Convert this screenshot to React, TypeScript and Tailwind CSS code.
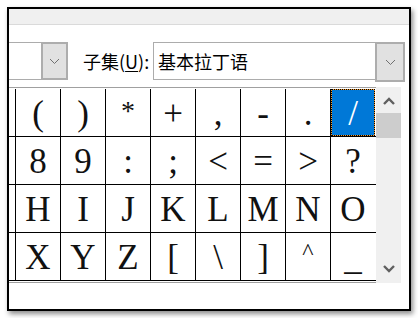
import React from "react";

const rows: string[][] = [
  ["(", ")", "*", "+", ",", "-", ".", "/"],
  ["8", "9", ":", ";", "<", "=", ">", "?"],
  ["H", "I", "J", "K", "L", "M", "N", "O"],
  ["X", "Y", "Z", "[", "\\", "]", "^", "_"],
];

function ComboChevron() {
  return (
    <svg width="11" height="7" viewBox="0 0 11 7">
      <polyline points="1,1 5.5,5.5 10,1" fill="none" stroke="#707070" strokeWidth="1" />
    </svg>
  );
}

function ScrollChevron({ up }: { up?: boolean }) {
  return (
    <svg width="12" height="8" viewBox="0 0 12 8">
      <polyline
        points={up ? "1,7 6,2 11,7" : "1,1 6,6 11,1"}
        fill="none"
        stroke="#606060"
        strokeWidth="2.4"
      />
    </svg>
  );
}

function Glyph({ ch }: { ch: string }) {
  if (ch === "^") {
    return <span className="text-[24px] leading-none -mt-[14px]">{ch}</span>;
  }
  if (ch === "*") {
    return <span className="text-[28px] leading-none -mt-[6px]">{ch}</span>;
  }
  return <span>{ch}</span>;
}

export default function App() {
  return (
    <div className="w-[418px] h-[318px] bg-white overflow-hidden">
      <div className="ml-[7px] mt-[7px] w-[404px] h-[304px] border-2 border-black bg-white flex flex-col shadow-[2px_3px_5px_rgba(0,0,0,0.45)]">
        <div className="h-[15px] box-content bg-[#f0f0f0] border-b border-[#dadada]" />
        <div
          className="h-[62px] flex items-start pt-[17px] text-[18px] text-black"
          style={{ fontFamily: '"Noto Sans CJK SC", "Noto Sans", sans-serif' }}
        >
          <div className="w-[59px] h-[38px] flex">
            <div className="flex-1 border-y border-[#acacac] bg-white" />
            <div className="w-[27px] h-full bg-[#e1e1e1] border-2 border-[#adadad] flex items-center justify-center">
              <ComboChevron />
            </div>
          </div>
          <div className="ml-[15px] h-[38px] flex items-center leading-none">
            子集(<span className="underline underline-offset-2">U</span>):
          </div>
          <div className="ml-auto mr-[4px] w-[252px] h-[38px] flex border border-[#acacac] bg-white">
            <div className="flex-1 flex items-center pl-[4px] leading-none">基本拉丁语</div>
            <div className="w-[26px] h-full bg-[#e1e1e1] border-2 border-[#adadad] -my-px -mr-px box-content flex items-center justify-center">
              <ComboChevron />
            </div>
          </div>
        </div>
        <div className="flex h-[196px]">
          <div
            className="w-[367px] h-full border-y border-[#a0a0a0] pt-px flex flex-col"
            style={{ fontFamily: '"Liberation Serif", serif' }}
          >
            {rows.map((row, ri) => (
              <div key={ri} className="h-[48px] border-b border-black flex">
                <div className="w-[6px]" />
                {row.map((ch, ci) => {
                  const sel = ri === 0 && ci === 7;
                  return (
                    <div key={ci} className="w-[45px] h-full border-l border-black">
                      {sel ? (
                        <div className="w-full h-full bg-[#f39a2e]">
                          <div className="w-full h-full border border-dotted border-black bg-[#0078d7] bg-clip-padding flex items-center justify-center text-white text-[35px] leading-none pt-[2px]">
                            {ch}
                          </div>
                        </div>
                      ) : (
                        <div className="w-full h-full flex items-center justify-center text-[#111] text-[35px] leading-none pt-[2px]">
                          <Glyph ch={ch} />
                        </div>
                      )}
                    </div>
                  );
                })}
              </div>
            ))}
          </div>
          <div className="w-[25px] h-full bg-[#f0f0f0] flex flex-col items-center">
            <div className="h-[26px] w-full flex items-center justify-center pt-[2px]">
              <ScrollChevron up />
            </div>
            <div className="h-[25px] w-full bg-[#cdcdcd]" />
            <div className="flex-1" />
            <div className="h-[26px] w-full flex items-center justify-center pb-[2px]">
              <ScrollChevron />
            </div>
          </div>
        </div>
      </div>
    </div>
  );
}
